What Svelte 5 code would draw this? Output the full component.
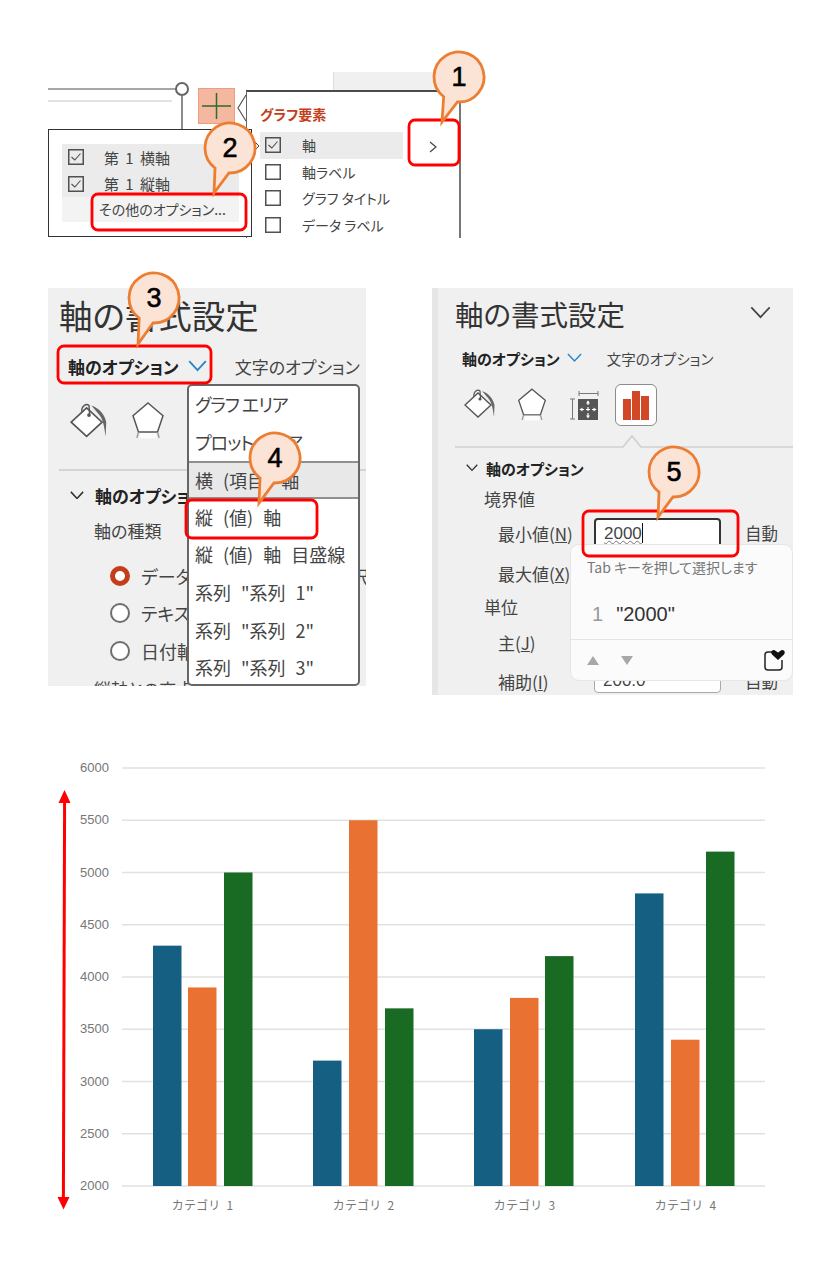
<script lang="ts">
	const grid = [6000, 5500, 5000, 4500, 4000, 3500, 3000, 2500, 2000];
	const seriesColors = ['#156082', '#e97132', '#196b24'];
	const categories = [
		{ label: 'カテゴリ 1', mid: 202.5, x: [153, 188, 224], v: [4300, 3900, 5000] },
		{ label: 'カテゴリ 2', mid: 363.5, x: [313, 349, 385], v: [3200, 5500, 3700] },
		{ label: 'カテゴリ 3', mid: 524.5, x: [474, 510, 545], v: [3500, 3800, 4200] },
		{ label: 'カテゴリ 4', mid: 685.5, x: [635, 671, 706], v: [4800, 3400, 5200] }
	];
	const yOf = (v: number) => 1186 - ((v - 2000) / 500) * 52.25;

	const redBoxes = [
		[409, 120, 50, 45],
		[92, 194, 154, 36],
		[58, 346, 153, 37],
		[186, 500, 131, 38],
		[583, 511, 155, 45]
	];

	const callouts = [
		{ n: 1, cx: 459, cy: 77, tx: 442, ty: 122 },
		{ n: 2, cx: 230, cy: 148, tx: 214, ty: 193 },
		{ n: 3, cx: 154, cy: 298, tx: 138, ty: 344 },
		{ n: 4, cx: 275, cy: 458, tx: 259, ty: 503 },
		{ n: 5, cx: 674, cy: 472, tx: 658, ty: 517 }
	];

	function balloon(c: { cx: number; cy: number; tx: number; ty: number }) {
		const r = 25;
		const a = Math.atan2(c.ty - c.cy, c.tx - c.cx);
		const d = 0.3;
		const x1 = c.cx + r * Math.cos(a + d);
		const y1 = c.cy + r * Math.sin(a + d);
		const x2 = c.cx + r * Math.cos(a - d);
		const y2 = c.cy + r * Math.sin(a - d);
		return `M${x1} ${y1}A${r} ${r} 0 1 1 ${x2} ${y2}L${c.tx} ${c.ty}Z`;
	}

	const dropdown = ['グラフ エリア', 'プロット エリア', '横 (項目) 軸', '縦 (値) 軸', '縦 (値) 軸 目盛線', '系列 "系列 1"', '系列 "系列 2"', '系列 "系列 3"'];
</script>

{#snippet check(on: boolean)}
	<svg class="check" viewBox="0 0 16 16" width="16" height="16">
		<rect x="0.75" y="0.75" width="14.5" height="14.5" fill="none" stroke="#505050" stroke-width="1.5" />
		{#if on}
			<path d="M3.5 8 L6.8 11 L12.5 4.5" fill="none" stroke="#505050" stroke-width="1.1" />
		{/if}
	</svg>
{/snippet}

{#snippet bucket(size: number)}
	<svg viewBox="0 0 32 32" width={size} height={size}>
		<path d="M1 17 L14 5 L27 17 L14 29 Z" fill="#fff" stroke="#555" stroke-width="1.4" />
		<path d="M10 9 C9 3 14 1 16 3 L16.5 10" fill="none" stroke="#555" stroke-width="1.2" />
		<circle cx="16" cy="11" r="1.6" fill="#555" />
		<path d="M18 3 C24 5 29 10 30.5 17 L30 29 C29 22 28 14 24 10 Z" fill="#666" />
	</svg>
{/snippet}

{#snippet pentagon(w: number, h: number)}
	<svg viewBox="0 0 30 36" width={w} height={h}>
		<path d="M15 1 L29.2 13 L24 28.5 L6 28.5 L0.8 13 Z" fill="#fff" stroke="#555" stroke-width="1.4" />
		<path d="M6 28.5 L4.5 34 M24 28.5 L25.5 34" stroke="#999" stroke-width="1.4" fill="none" />
		<rect x="7" y="29.5" width="16" height="5" fill="#fff" opacity="0.8" />
	</svg>
{/snippet}

{#snippet chevron(w: number, color: string, sw: number)}
	<svg viewBox="0 0 16 10" width={w} height={w * 0.625}>
		<path d="M1 1 L8 8.5 L15 1" fill="none" stroke={color} stroke-width={sw} />
	</svg>
{/snippet}

<main class="page">
	<section class="top">
		<div class="tab-strip"></div>
		<div class="edge-line"></div>
		<div class="edge-line light"></div>
		<div class="handle"></div>
		<div class="handle-stem"></div>
		<div class="plus">
			<svg viewBox="0 0 37 36" width="37" height="36">
				<path d="M18.5 5 V31 M4 18 H33" stroke="#2f6b2a" stroke-width="1.5" />
			</svg>
		</div>

		<div class="elements">
			<svg class="nub" viewBox="0 0 10 28" width="10" height="28">
				<path d="M9 1 L1 14 L9 27" fill="#fff" stroke="#555" stroke-width="1.2" />
			</svg>
			<div class="elements-title">グラフ要素</div>
			<div class="el-row active">
				{@render check(true)}<span>軸</span>
			</div>
			<div class="el-row">{@render check(false)}<span>軸ラベル</span></div>
			<div class="el-row">{@render check(false)}<span>グラフ タイトル</span></div>
			<div class="el-row">{@render check(false)}<span>データ ラベル</span></div>
			<svg class="more" viewBox="0 0 8 12" width="8" height="12">
				<path d="M1 1 L7 6 L1 11" fill="none" stroke="#444" stroke-width="1.2" />
			</svg>
		</div>

		<div class="axes-menu">
			<div class="axes-row">{@render check(true)}<span>第 1 横軸</span></div>
			<div class="axes-row">{@render check(true)}<span>第 1 縦軸</span></div>
			<div class="axes-more">その他のオプション...</div>
		</div>
		<svg class="axes-nub" viewBox="0 0 8 14" width="8" height="14">
			<path d="M1 1 L7 7 L1 13" fill="#fff" stroke="#444" stroke-width="1" />
		</svg>
	</section>

	<section class="panels">
		<div class="panel left">
			<div class="title">軸の書式設定</div>
			<div class="tabs">
				<span class="tab-on">軸のオプション</span>
				{@render chevron(19, '#2b88c8', 1.6)}
				<span class="tab-off">文字のオプション</span>
			</div>
			<div class="icons">
				{@render bucket(38)}
				{@render pentagon(32, 38)}
			</div>
			<div class="rule"></div>
			<div class="group-head">
				{@render chevron(14, '#333', 1.8)}
				<span>軸のオプション</span>
			</div>
			<div class="axis-kind">軸の種類</div>
			<div class="radios">
				<div class="radio-row"><i class="radio on"></i><span>データを基準に自動的に選択する</span></div>
				<div class="radio-row"><i class="radio"></i><span>テキスト軸</span></div>
				<div class="radio-row"><i class="radio"></i><span>日付軸</span></div>
			</div>
			<div class="axis-kind cross">縦軸との交点</div>

			<div class="dropdown">
				{#each dropdown as item, i}
					<div class="drop-item" class:kana={i < 2} class:current={i === 2}>{item}</div>
				{/each}
			</div>
		</div>

		<div class="panel right">
			<div class="title">
				<span>軸の書式設定</span>
				{@render chevron(21, '#444', 1.3)}
			</div>
			<div class="tabs">
				<span class="tab-on">軸のオプション</span>
				{@render chevron(15, '#2b88c8', 1.6)}
				<span class="tab-off">文字のオプション</span>
			</div>
			<div class="icons">
				{@render bucket(32)}
				{@render pentagon(28, 34)}
				<svg class="size-icon" viewBox="0 0 30 30" width="30" height="30">
					<path d="M10 3.5 H29 M10 1 V6 M29 1 V6 M3.5 9 V29 M1 9 H6 M1 29 H6" stroke="#777" stroke-width="1" fill="none" />
					<rect x="9" y="9" width="20" height="21" fill="#555" />
					<path d="M19 11 V28 M11 19.5 H27" stroke="#fff" stroke-width="1.2" stroke-dasharray="4 2" />
					<path d="M19 10.5 L17 13.5 H21 Z M19 28.5 L17 25.5 H21 Z M10.5 19.5 L13.5 17.5 V21.5 Z M27.5 19.5 L24.5 17.5 V21.5 Z" fill="#fff" />
				</svg>
				<div class="icon-btn">
					<svg viewBox="0 0 26 29" width="26" height="29">
						<path d="M0 8 H8 V29 H0 Z M9 0 H17 V29 H9 Z M18 5 H26 V29 H18 Z" fill="#d24726" />
					</svg>
				</div>
			</div>
			<svg class="notch" viewBox="0 0 338 15" width="338" height="15">
				<path d="M0 13 H168 L177 2 L186 13 H338" fill="none" stroke="#cfcfcf" stroke-width="1.5" />
			</svg>
			<div class="group-head">
				{@render chevron(12, '#333', 1.8)}
				<span>軸のオプション</span>
			</div>
			<div class="form">
				<div class="f-head wide">境界値</div>
				<label class="f-label" for="min">最小値(<u>N</u>)</label>
				<div id="min" class="input active"><span class="squiggle">2000</span><i class="caret"></i></div>
				<span class="auto">自動</span>
				<div class="f-label">最大値(<u>X</u>)</div>
				<div></div>
				<div></div>
				<div class="f-head wide">単位</div>
				<div class="f-label">主(<u>J</u>)</div>
				<div></div>
				<div></div>
				<div class="f-label">補助(<u>I</u>)</div>
				<div class="input minor">200.0</div>
				<span class="auto">自動</span>
			</div>

			<div class="suggest">
				<div class="hint">Tab キーを押して選択します</div>
				<div class="choice"><span class="idx">1</span><span class="val">"2000"</span></div>
				<div class="suggest-foot">
					<svg viewBox="0 0 46 10" width="46" height="10">
						<path d="M0 10 L6 1 L12 10 Z M34 1 H46 L40 10 Z" fill="#a8a8a8" />
					</svg>
					<svg viewBox="0 0 22 22" width="22" height="22">
						<path d="M5 3 H10 M19 11 V18 Q19 21 16 21 H5 Q2 21 2 18 V6 Q2 3 5 3" fill="none" stroke="#222" stroke-width="1.5" />
						<path d="M15 11 L9 5.5 C7 3 9.5 0 12 1.5 L15 3.5 L18 1.5 C20.5 0 23 3 21 5.5 Z" fill="#111" />
					</svg>
				</div>
			</div>
		</div>
	</section>

	<svg class="chart" viewBox="0 740 817 500" width="817" height="500">
		{#each grid as g}
			<line x1="122" x2="765" y1={yOf(g)} y2={yOf(g)} stroke="#e1e1e1" stroke-width="1.3" />
			<text class="tick" x="109" y={yOf(g) + 4} text-anchor="end">{g}</text>
		{/each}
		{#each categories as cat}
			{#each cat.x as x, i}
				<rect {x} y={yOf(cat.v[i])} width="28.5" height={1186 - yOf(cat.v[i])} fill={seriesColors[i]} />
			{/each}
			<text class="cat" x={cat.mid} y="1210" text-anchor="middle">{cat.label}</text>
		{/each}
		<path d="M64.6 800 L63.4 1200" stroke="#ff0000" stroke-width="3" />
		<path d="M64.5 790 L70.5 803 H58.5 Z M63.5 1209.5 L57.5 1197 H69.5 Z" fill="#ff0000" />
	</svg>

	<svg class="marks" viewBox="0 0 817 1261" width="817" height="1261">
		{#each redBoxes as b}
			<rect x={b[0]} y={b[1]} width={b[2]} height={b[3]} rx="6" fill="none" stroke="#ff0000" stroke-width="2.8" />
		{/each}
		{#each callouts as c}
			<path d={balloon(c)} fill="#fbe3d6" stroke="#ed7d31" stroke-width="2.8" />
			<text class="num" x={c.cx} y={c.cy + 9} text-anchor="middle">{c.n}</text>
		{/each}
	</svg>
</main>

<style>
	:global(body) {
		margin: 0;
		background: #fff;
	}

	.page {
		position: relative;
		width: 817px;
		height: 1261px;
		padding-top: 72px;
		box-sizing: border-box;
		overflow: hidden;
		font-family: "Noto Sans CJK JP", "Liberation Sans", sans-serif;
		color: #444;
		font-feature-settings: "palt";
	}

	/* chart element flyouts */
	.top {
		position: relative;
		margin-left: 48px;
		width: 414px;
		height: 166px;
		overflow: hidden;
	}

	.tab-strip {
		position: absolute;
		left: 285px;
		top: 0;
		width: 110px;
		height: 18px;
		background: #f0f0f0;
		border-left: 1px solid #ddd;
	}

	.edge-line {
		position: absolute;
		left: 0;
		top: 16px;
		width: 128px;
		height: 2px;
		background: #a6a6a6;
	}

	.edge-line.light {
		top: 28px;
		width: 124px;
		background: #e2e2e2;
	}

	.handle {
		position: absolute;
		left: 127px;
		top: 10px;
		width: 14px;
		height: 14px;
		border: 2px solid #666;
		border-radius: 50%;
		background: #fff;
		box-sizing: border-box;
	}

	.handle-stem {
		position: absolute;
		left: 133px;
		top: 24px;
		width: 2px;
		height: 34px;
		background: #8c8c8c;
	}

	.plus {
		position: absolute;
		left: 150px;
		top: 16px;
		width: 37px;
		height: 36px;
		background: #f4b79f;
		outline: 1px solid #ee9d7f;
		outline-offset: -1px;
	}

	.plus svg {
		display: block;
	}

	.elements {
		position: absolute;
		left: 198px;
		top: 18px;
		width: 215px;
		height: 148px;
		box-sizing: border-box;
		background: #fff;
		border-top: 2px solid #4a4a4a;
		border-left: 1px solid #666;
		border-right: 2px solid #777;
		padding: 12px 0 0 13px;
	}

	.nub {
		position: absolute;
		left: -10px;
		top: 2px;
	}

	.elements-title {
		font-size: 14px;
		font-weight: 700;
		line-height: 20px;
		color: #c43e1c;
		margin-bottom: 8px;
	}

	.el-row {
		display: flex;
		align-items: center;
		gap: 21px;
		width: 143px;
		height: 26.6px;
		padding-left: 5px;
		box-sizing: border-box;
		font-size: 14px;
	}

	.el-row.active {
		background: #ebebeb;
	}

	.check {
		flex: none;
		display: block;
	}

	.more {
		position: absolute;
		left: 182px;
		top: 49px;
	}

	.axes-menu {
		position: absolute;
		left: 0;
		top: 57px;
		width: 204px;
		height: 108px;
		box-sizing: border-box;
		background: #fff;
		border: 1px solid #333;
		padding: 14px 12px 0 13px;
	}

	.axes-row {
		display: flex;
		align-items: center;
		gap: 20px;
		height: 26.5px;
		padding-left: 6px;
		background: #ebebeb;
		font-size: 15px;
		word-spacing: 3px;
	}

	.axes-more {
		height: 25px;
		line-height: 25px;
		padding-left: 37px;
		background: #f3f3f3;
		font-size: 14px;
		white-space: nowrap;
	}

	.axes-nub {
		position: absolute;
		left: 204px;
		top: 67px;
	}

	/* format panes */
	.panels {
		display: flex;
		align-items: flex-start;
		gap: 66px;
		margin: 50px 0 0 48px;
	}

	.panel {
		position: relative;
		flex: none;
		box-sizing: border-box;
		background: #f0f0f0;
		overflow: hidden;
	}

	.panel.left {
		width: 318px;
		height: 398px;
		padding-left: 11px;
	}

	.panel.right {
		width: 361px;
		height: 407px;
		padding-left: 17px;
		border-left: 6px solid #e6e6e6;
	}

	.title {
		display: flex;
		align-items: center;
		justify-content: space-between;
		white-space: nowrap;
		color: #333;
	}

	.left .title {
		height: 52px;
		margin-bottom: 2px;
		font-size: 33.5px;
	}

	.right .title {
		height: 50px;
		margin-bottom: 2px;
		font-size: 28.5px;
		padding-right: 22px;
	}

	.tabs {
		display: flex;
		align-items: center;
		white-space: nowrap;
	}

	.left .tabs {
		height: 48px;
		padding-left: 9px;
		font-size: 17px;
		gap: 9px;
	}

	.right .tabs {
		height: 36px;
		padding-left: 7px;
		font-size: 15px;
		gap: 7px;
	}

	.tab-on {
		font-weight: 700;
		color: #222;
	}

	.left .tab-off {
		margin-left: 19px;
	}

	.right .tab-off {
		font-size: 14.5px;
		margin-left: 18px;
	}

	.icons {
		display: flex;
		align-items: flex-start;
	}

	.icons svg {
		display: block;
		flex: none;
	}

	.left .icons {
		margin: 12px 0 0 11px;
		gap: 24px;
		height: 38px;
	}

	.right .icons {
		margin: 8px 0 0 9px;
		height: 42px;
		gap: 22px;
		padding-top: 4px;
		box-sizing: border-box;
	}

	.size-icon {
		margin-left: 1px;
		margin-top: 2px;
	}

	.icon-btn {
		width: 42px;
		height: 42px;
		margin: -4px 0 0 -6px;
		box-sizing: border-box;
		background: #fff;
		border: 1.5px solid #8c8c8c;
		border-radius: 6px;
		display: flex;
		align-items: center;
		justify-content: center;
	}

	.rule {
		height: 2px;
		margin-top: 29px;
		background: #d4d4d4;
	}

	.notch {
		display: block;
		margin-top: 8px;
	}

	.group-head {
		display: flex;
		align-items: center;
		font-weight: 700;
		color: #222;
		white-space: nowrap;
	}

	.group-head svg {
		flex: none;
	}

	.left .group-head {
		height: 24px;
		margin: 12px 0 0 11px;
		gap: 11px;
		font-size: 17px;
	}

	.right .group-head {
		height: 22px;
		margin: 8px 0 1px 11px;
		gap: 8px;
		font-size: 15px;
	}

	.axis-kind {
		height: 24px;
		line-height: 24px;
		margin: 12px 0 0 35px;
		font-size: 17px;
		white-space: nowrap;
	}

	.axis-kind.cross {
		height: 37px;
		line-height: 37px;
		margin-top: 0;
	}

	.radios {
		margin: 14px 0 0 51px;
	}

	.radio-row {
		display: flex;
		align-items: center;
		gap: 11px;
		height: 37.5px;
		font-size: 18px;
		white-space: nowrap;
	}

	.radio {
		flex: none;
		width: 20px;
		height: 20px;
		box-sizing: border-box;
		border: 2px solid #6e6e6e;
		border-radius: 50%;
		background: #fff;
	}

	.radio.on {
		border: 5px solid #c43e1c;
	}

	.dropdown {
		position: absolute;
		left: 139px;
		top: 96px;
		width: 173px;
		height: 302px;
		box-sizing: border-box;
		background: #fff;
		border: 2px solid #666;
		border-radius: 5px;
		overflow: hidden;
	}

	.drop-item {
		height: 37.6px;
		line-height: 37px;
		padding-left: 6px;
		box-sizing: border-box;
		font-size: 18px;
		word-spacing: 6px;
		color: #444;
		white-space: nowrap;
	}

	.drop-item.kana {
		word-spacing: 0;
		letter-spacing: -1px;
	}

	.drop-item.current {
		background: #e8e8e8;
		border-top: 2px solid #8f8f8f;
		border-bottom: 2px solid #8f8f8f;
		line-height: 34px;
	}

	.form {
		display: grid;
		grid-template-columns: 110px 127px auto;
		grid-template-rows: 24px 44px 36px 32px 38px 40px;
		column-gap: 0;
		margin: 8px 0 0 29px;
		font-size: 17px;
		white-space: nowrap;
	}

	.f-head {
		grid-column: 1 / -1;
		line-height: 24px;
		font-size: 17px;
	}

	.f-head.wide {
		align-self: center;
	}

	.f-label {
		display: block;
		align-self: center;
		padding-left: 14px;
	}

	.auto {
		align-self: center;
		margin-left: 24px;
		font-size: 16.5px;
	}

	.input {
		box-sizing: border-box;
		height: 31px;
		background: #fff;
		padding-left: 8px;
		font-family: "Liberation Sans", sans-serif;
		font-size: 17px;
		line-height: 27px;
	}

	.input.active {
		align-self: start;
		margin-top: 7px;
		border: 2px solid #333;
		border-radius: 4px;
	}

	.squiggle {
		text-decoration: underline wavy #777 1px;
	}

	.caret {
		display: inline-block;
		width: 1.5px;
		height: 20px;
		background: #111;
		vertical-align: -4px;
	}

	.input.minor {
		margin-top: 4px;
		height: 28px;
		line-height: 30px;
		border: 1px solid #aaa;
		border-radius: 4px;
		overflow: hidden;
	}

	.suggest {
		position: absolute;
		left: 132px;
		top: 256px;
		width: 223px;
		height: 137px;
		box-sizing: border-box;
		background: #fbfbfb;
		border: 1px solid #e6e6e6;
		border-radius: 9px;
		display: flex;
		flex-direction: column;
	}

	.hint {
		height: 45px;
		line-height: 45px;
		padding-left: 16px;
		font-size: 14px;
		color: #777;
		white-space: nowrap;
	}

	.choice {
		height: 50px;
		display: flex;
		align-items: center;
		gap: 13px;
		padding-left: 21px;
		border-bottom: 1px solid #e4e4e4;
		box-sizing: border-box;
		font-family: "Liberation Sans", sans-serif;
		font-size: 20px;
	}

	.idx {
		color: #999;
	}

	.val {
		color: #333;
	}

	.suggest-foot {
		flex: 1;
		display: flex;
		align-items: center;
		justify-content: space-between;
		padding: 0 7px 0 16px;
	}

	.chart {
		display: block;
		margin-top: 45px;
	}

	.tick {
		font-family: "Liberation Sans Narrow", "Liberation Sans", sans-serif;
		font-size: 13px;
		fill: #777;
		font-feature-settings: normal;
	}

	.cat {
		font-family: "Noto Sans CJK JP", sans-serif;
		font-size: 12px;
		fill: #777;
		letter-spacing: 0.2px;
		word-spacing: 3px;
		font-feature-settings: normal;
	}

	.marks {
		position: absolute;
		left: 0;
		top: 0;
		pointer-events: none;
	}

	.num {
		font-family: "Liberation Sans", sans-serif;
		font-size: 27px;
		font-weight: 400;
		fill: #000;
		stroke: #000;
		stroke-width: 0.6px;
		font-feature-settings: normal;
	}
</style>
